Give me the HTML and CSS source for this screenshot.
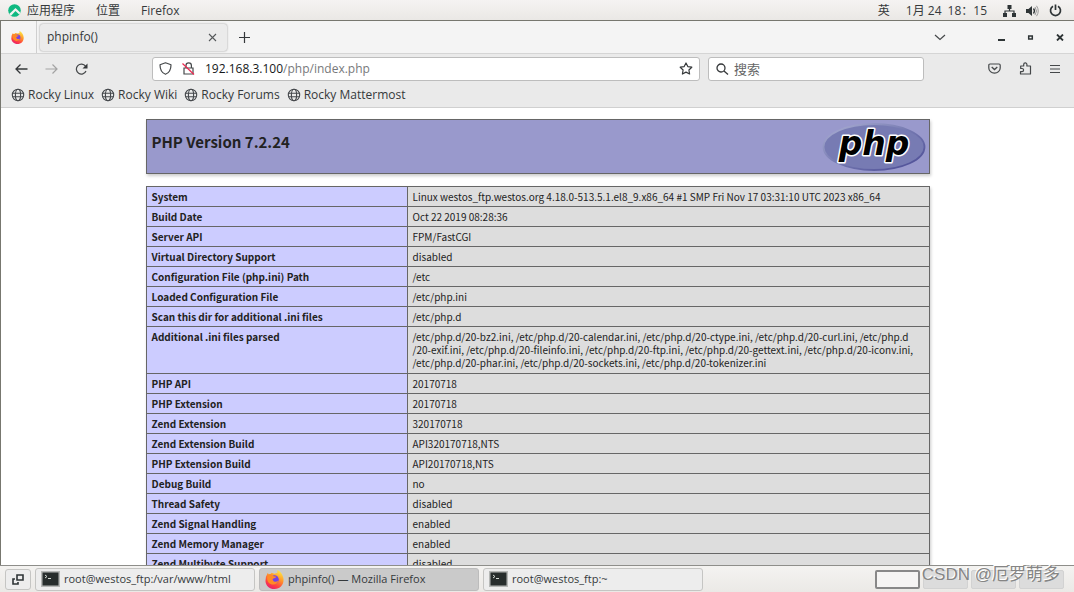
FILE: index.html
```html
<!DOCTYPE html>
<html lang="zh-CN">
<head>
<meta charset="utf-8">
<title>phpinfo()</title>
<link rel="stylesheet" href="styles.css">
</head>
<body>
<svg class="defs" width="0" height="0" aria-hidden="true">
  <defs>
    <linearGradient id="flame" x1="0.8" y1="0" x2="0.3" y2="1"><stop offset="0" stop-color="#fff04a"/><stop offset="0.4" stop-color="#ff9a2a"/><stop offset="0.75" stop-color="#ff4340"/><stop offset="1" stop-color="#e81e6f"/></linearGradient>
    <symbol id="firefox" viewBox="0 0 20 20">
      <path d="M1 7 3 3l1 2 2-1 1-1 3 1 3-1 0-3c3 1 6 5 6.500 9.500C20 16 15.500 20 10 20S.5 16 .5 11.500Z" fill="url(#flame)"/>
      <circle cx="10" cy="10" r="4.500" fill="#7542e5"/>
      <path d="M3 5c3-1 5 0 6 1.500l3 .5c-1 2-4 1.500-4 3 1 3 4 3 6 1-1 5-8 6-11 1C2 10 2 7 3 5Z" fill="#ff8a26"/>
    </symbol>
    <symbol id="globe" viewBox="0 0 14 14"><g fill="none" stroke="#45484c" stroke-width="1.100"><circle cx="7" cy="7" r="5.700"/><ellipse cx="7" cy="7" rx="2.600" ry="5.700"/><path d="M1.500 5.300h11M1.500 8.700h11"/></g></symbol>
    <symbol id="terminal" viewBox="0 0 19 16"><path d="M0 0h19v16H0z" fill="#b5b7b5"/><path d="M1.500 1.500h16v13h-16z" fill="#272d2c"/><path d="m4 4 2 1.500L4 7M7 7.500h3" fill="none" stroke="#d5dbd5"/></symbol>
  </defs>
</svg>
<div class="desktop">
  <header class="topbar">
    <nav class="menus">
      <button class="plain apps"><svg width="13" height="13" viewBox="0 0 13 13"><circle cx="6.500" cy="6.500" r="6.300" fill="#10b981"/><path d="M1.200 10 7.500 4l5 4.800-1.300 1.700L7.500 7 3 11.700Z" fill="#f3f2f0"/></svg>应用程序</button>
      <button class="plain">位置</button>
      <button class="plain">Firefox</button>
    </nav>
    <div class="status">
      <span>英</span>
      <time>1月 24&ensp;18：15</time>
      <div class="tray">
        <svg width="13" height="12" viewBox="0 0 13 12"><path d="M4.500 0h4v4h-4zM0 8h4v4H0zM9 8h4v4H9z" fill="#2e3436"/><path d="M6.500 4v2M2 8V6h9v2" fill="none" stroke="#2e3436" stroke-width="1.200"/></svg>
        <svg width="13" height="12" viewBox="0 0 13 12"><path d="M0 4h2.500L6 1v10L2.500 8H0z" fill="#2e3436"/><path d="M7.500 3.500q2 2.500 0 5" fill="none" stroke="#2e3436" stroke-width="1.300"/><path d="M9 2q3 4 0 8M10.500.8q3.500 5.200 0 10.400" fill="none" stroke="#999"/></svg>
        <svg width="13" height="13" viewBox="0 0 13 13"><path d="M4 2.200a5 5 0 1 0 5 0M6.500.500v5.500" fill="none" stroke="#2e3436" stroke-width="1.700"/></svg>
      </div>
    </div>
  </header>

  <main class="browser">
    <div class="tabbar">
      <div class="pinned"><svg width="13" height="13"><use href="#firefox"/></svg></div>
      <div class="tab"><span>phpinfo()</span><button class="plain" aria-label="Close tab"><svg width="9" height="9" viewBox="0 0 9 9"><path d="m1 1 7 7M8 1 1 8" stroke="#55585a" stroke-width="1.100"/></svg></button></div>
      <button class="plain new" aria-label="New tab"><svg width="11" height="11" viewBox="0 0 11 11"><path d="M5.500 0v11M0 5.500h11" stroke="#35383a" stroke-width="1.200"/></svg></button>
      <div class="window-buttons">
        <button class="plain list" aria-label="List tabs"><svg width="12" height="7" viewBox="0 0 12 7"><path d="m1 1 5 4.500L11 1" fill="none" stroke="#45484a" stroke-width="1.200"/></svg></button>
        <button class="plain" aria-label="Minimize"><svg width="7" height="7" viewBox="0 0 7 7"><path d="M0 5h7v2H0z" fill="#2e3436"/></svg></button>
        <button class="plain" aria-label="Maximize"><svg width="7" height="7" viewBox="0 0 7 7"><path d="M1.700 2h3.600v3H1.700z" fill="none" stroke="#2e3436" stroke-width="1.500"/></svg></button>
        <button class="plain" aria-label="Close"><svg width="8" height="7" viewBox="0 0 8 7"><path d="m1 .5 6 6M7 .5l-6 6" stroke="#2e3436" stroke-width="1.800"/></svg></button>
      </div>
    </div>
    <div class="toolbar">
      <div class="history">
        <button class="plain" aria-label="Back"><svg width="13" height="12" viewBox="0 0 13 12"><path d="M12.500 6H1M5.500 1.500 1 6l4.500 4.500" fill="none" stroke="#35383a" stroke-width="1.300"/></svg></button>
        <button class="plain" aria-label="Forward"><svg width="13" height="12" viewBox="0 0 13 12"><path d="M.5 6H12M7.500 1.500 12 6l-4.500 4.500" fill="none" stroke="#a3a3a3" stroke-width="1.200"/></svg></button>
        <button class="plain" aria-label="Reload"><svg width="13" height="12" viewBox="0 0 13 12"><path d="M10.500 3.200A5 5 0 1 0 11 8" fill="none" stroke="#45484a" stroke-width="1.200"/><path d="M12.500.500v5h-5z" fill="#35383a"/></svg></button>
      </div>
      <div class="address">
        <svg width="13" height="13" viewBox="0 0 13 13"><path d="m6.500.8 5.500 2C12 8 10 11 6.500 12.300 3 11 1 8 1 2.800Z" fill="none" stroke="#45484a" stroke-width="1.200" stroke-linejoin="round"/></svg>
        <svg width="13" height="13" viewBox="0 0 13 13"><path d="M2 6h9v6H2zM4 6V3.500a2.700 2.700 0 0 1 5.400 0V6" fill="none" stroke="#45484a" stroke-width="1.200"/><path d="m.5 1.500 11.500 11" stroke="#ee2850" stroke-width="1.200"/></svg>
        <a href="#" aria-label="Address"><b>192.168.3.100</b>/php/index.php</a>
        <button class="plain" aria-label="Bookmark"><svg width="14" height="13" viewBox="0 0 14 13"><path d="m7 1 1.800 3.600 4 .6-2.900 2.800.7 4L7 10.100 3.400 12l.7-4-2.900-2.800 4-.6Z" fill="none" stroke="#35383a" stroke-width="1.200" stroke-linejoin="round"/></svg></button>
      </div>
      <label class="search"><svg width="13" height="12" viewBox="0 0 13 12"><circle cx="5" cy="5" r="4" fill="none" stroke="#35383a" stroke-width="1.300"/><path d="m8 8 4 3.500" stroke="#35383a" stroke-width="1.300"/></svg><input type="text" placeholder="搜索" aria-label="搜索"></label>
      <div class="tools">
        <button class="plain" aria-label="Pocket"><svg width="13" height="11" viewBox="0 0 13 11"><path d="M2 1h9q1.200 0 1.200 1.200V5a5.700 5.200 0 0 1-11.400 0V2.200Q.800 1 2 1Z" fill="none" stroke="#45484a" stroke-width="1.200"/><path d="m3.700 4 2.800 2.600L9.300 4" fill="none" stroke="#45484a" stroke-width="1.300"/></svg></button>
        <button class="plain" aria-label="Extensions"><svg width="13" height="13" viewBox="0 0 13 13"><path d="M1.700 4h3V2.500a1.600 1.600 0 0 1 3.200 0V4h3.600v8h-10V9.700h1.500a1.500 1.500 0 0 0 0-3.200H1.700Z" fill="none" stroke="#45484a" stroke-width="1.200" stroke-linejoin="round"/></svg></button>
        <button class="plain" aria-label="Menu"><svg width="10" height="8" viewBox="0 0 10 8"><path d="M0 .5h10M0 4h10M0 7.500h10" stroke="#45484a"/></svg></button>
      </div>
    </div>
    <nav class="bookmarks">
      <a href="#"><svg width="14" height="14"><use href="#globe"/></svg>Rocky Linux</a>
      <a href="#"><svg width="14" height="14"><use href="#globe"/></svg>Rocky Wiki</a>
      <a href="#"><svg width="14" height="14"><use href="#globe"/></svg>Rocky Forums</a>
      <a href="#"><svg width="14" height="14"><use href="#globe"/></svg>Rocky Mattermost</a>
    </nav>
    <section class="page">
      <div class="banner">
        <h1>PHP Version 7.2.24</h1>
        <svg width="104" height="50" viewBox="0 0 104 50" role="img" aria-label="PHP logo">
          <defs><linearGradient id="rim" x1="0" y1="0" x2="1" y2="1"><stop offset="0" stop-color="#aeb2d5"/><stop offset="0.5" stop-color="#7478b0"/><stop offset="1" stop-color="#484893"/></linearGradient></defs>
          <ellipse cx="52" cy="25" rx="50.500" ry="23" fill="#777bb3" stroke="url(#rim)" stroke-width="1.800"/>
          <text x="52" y="33" class="logo-text" text-anchor="middle">php</text>
        </svg>
      </div>
      <table class="info">
        <tbody>
          <tr><th scope="row">System</th><td>Linux westos_ftp.westos.org 4.18.0-513.5.1.el8_9.x86_64 #1 SMP Fri Nov 17 03:31:10 UTC 2023 x86_64</td></tr>
          <tr><th scope="row">Build Date</th><td>Oct 22 2019 08:28:36</td></tr>
          <tr><th scope="row">Server API</th><td>FPM/FastCGI</td></tr>
          <tr><th scope="row">Virtual Directory Support</th><td>disabled</td></tr>
          <tr><th scope="row">Configuration File (php.ini) Path</th><td>/etc</td></tr>
          <tr><th scope="row">Loaded Configuration File</th><td>/etc/php.ini</td></tr>
          <tr><th scope="row">Scan this dir for additional .ini files</th><td>/etc/php.d</td></tr>
          <tr class="files"><th scope="row">Additional .ini files parsed</th><td>/etc/php.d/20-bz2.ini, /etc/php.d/20-calendar.ini, /etc/php.d/20-ctype.ini, /etc/php.d/20-curl.ini, /etc/php.d<wbr>/20-exif.ini, /etc/php.d/20-fileinfo.ini, /etc/php.d/20-ftp.ini, /etc/php.d/20-gettext.ini, /etc/php.d/20-iconv.ini, /etc/php.d/20-phar.ini, /etc/php.d/20-sockets.ini, /etc/php.d/20-tokenizer.ini</td></tr>
          <tr><th scope="row">PHP API</th><td>20170718</td></tr>
          <tr><th scope="row">PHP Extension</th><td>20170718</td></tr>
          <tr><th scope="row">Zend Extension</th><td>320170718</td></tr>
          <tr><th scope="row">Zend Extension Build</th><td>API320170718,NTS</td></tr>
          <tr><th scope="row">PHP Extension Build</th><td>API20170718,NTS</td></tr>
          <tr><th scope="row">Debug Build</th><td>no</td></tr>
          <tr><th scope="row">Thread Safety</th><td>disabled</td></tr>
          <tr><th scope="row">Zend Signal Handling</th><td>enabled</td></tr>
          <tr><th scope="row">Zend Memory Manager</th><td>enabled</td></tr>
          <tr><th scope="row">Zend Multibyte Support</th><td>disabled</td></tr>
        </tbody>
      </table>
    </section>
  </main>

  <footer class="taskbar">
    <button class="task show" aria-label="Show desktop"><svg width="12" height="11" viewBox="0 0 12 11"><path d="M5 1h6v5H5z" fill="none" stroke="#2e3436" stroke-width="1.600"/><path d="M3 5H1v5h5V8" fill="none" stroke="#2e3436" stroke-width="1.600"/></svg></button>
    <button class="task"><svg width="19" height="16"><use href="#terminal"/></svg>root@westos_ftp:/var/www/html</button>
    <button class="task active"><svg width="19" height="19"><use href="#firefox"/></svg>phpinfo() — Mozilla Firefox</button>
    <button class="task"><svg width="19" height="16"><use href="#terminal"/></svg>root@westos_ftp:~</button>
    <div class="workspaces">
      <button class="current" aria-label="Workspace 1"></button><button aria-label="Workspace 2"></button><button aria-label="Workspace 3"></button><button aria-label="Workspace 4"></button>
    </div>
    <span class="watermark">CSDN @厄罗萌多</span>
  </footer>
</div>
</body>
</html>
```
FILE: styles.css
```css
* { box-sizing: border-box; }
body {
  margin: 0;
  font: 12px/16px "Open Sans", "Noto Sans CJK SC", sans-serif;
  color: #35393b;
}
svg { display: block; flex: none; }
.defs { position: absolute; }
a { color: inherit; text-decoration: none; }
button { font: inherit; color: inherit; }
.plain { display: flex; align-items: center; padding: 0; border: 0; background: none; }
.desktop { display: flex; flex-direction: column; height: 100vh; overflow: hidden; }

/* desktop panel */
.topbar {
  display: flex; align-items: center; justify-content: space-between;
  flex: none; height: 21px; padding: 1px 12px 0 8px;
  border-bottom: 1px solid #77776f;
  background: linear-gradient(#f5f3f2, #eae8e5);
}
.menus { display: flex; gap: 21px; }
.apps { gap: 6px; }
.status { display: flex; align-items: center; gap: 16px; }
.tray { display: flex; align-items: center; gap: 10px; }

/* browser chrome */
.browser {
  display: flex; flex-direction: column; flex: 1; min-height: 0;
  border-left: 1px solid #77776f;
  background: #eaeaea;
}
.tabbar {
  display: flex; align-items: center; flex: none; height: 33px;
  border-bottom: 1px solid #d5d5d5;
  background: #f4f4f4;
}
.pinned { display: flex; align-items: center; align-self: stretch; width: 36px; padding-left: 10px; border-right: 1px solid #cfcfcf; }
.tab {
  display: flex; align-items: center; justify-content: space-between;
  width: 187px; height: 27px; margin-left: 3px; padding: 0 10px 0 7px;
  border-radius: 3px; background: #ebebeb; box-shadow: 0 0 2px #8c8c8c;
}
.new { margin-left: 12px; }
.window-buttons { display: flex; align-items: center; gap: 22px; margin-left: auto; padding-right: 10px; }
.list { margin-right: 30px; }
.toolbar { display: flex; align-items: center; flex: none; height: 29px; }
.history { display: flex; gap: 17px; width: 151px; padding-left: 14px; flex: none; }
.address, .search {
  display: flex; align-items: center; height: 24px;
  border: 1px solid #bdbdbd; border-radius: 3px; background: #fff;
}
.address { flex: 1; gap: 10px; padding: 0 6px; color: #77797b; }
.address a { flex: 1; }
.address b { font-weight: 400; color: #15181a; }
.search { flex: 0 1 216px; gap: 5px; min-width: 0; margin-left: 8px; padding-left: 7px; }
.search input { width: 100%; min-width: 0; padding: 0; border: 0; outline: 0; background: none; font: inherit; font-size: 13px; }
.search input::placeholder { color: #666; opacity: 1; }
.tools { display: flex; align-items: center; justify-content: flex-end; gap: 18px; flex: none; width: 150px; padding-right: 14px; }
.bookmarks { display: flex; align-items: center; gap: 7px; flex: none; height: 25px; padding-left: 10px; border-bottom: 1px solid #d0d0d0; }
.bookmarks a { display: flex; align-items: center; gap: 3px; }

/* document */
.page {
  flex: 1; min-height: 0; overflow: hidden; padding: 11px 16px 0;
  background: #fff; color: #222;
  font: 10px/13px "Noto Sans CJK SC", sans-serif;
}
.banner {
  display: flex; justify-content: space-between;
  max-width: 784px; height: 55px; margin: 0 auto 12px; padding: 2px 3px 0 5px;
  border: 1px solid #666; background: #9999cc; box-shadow: 1px 2px 3px #ccc;
}
h1 { margin: 10px 0 0; font-size: 15px; line-height: 20px; }
.logo-text {
  font: italic bold 33px "DejaVu Sans", sans-serif;
  fill: #000; stroke: #fff; stroke-width: 3px; paint-order: stroke; stroke-linejoin: round;
}
.info {
  width: 100%; max-width: 784px; margin: 0 auto; table-layout: fixed;
  border-collapse: collapse; box-shadow: 1px 2px 3px #ccc;
}
.info th, .info td { padding: 3px 5px; border: 1px solid #666; text-align: left; vertical-align: top; }
.info th { width: 261px; background: #ccccff; }
.info td { background: #dddddd; }
.files { height: 47px; }

/* window list */
.taskbar {
  display: flex; align-items: center; gap: 4px; flex: none; position: relative;
  height: 27px; padding: 0 10px 0 5px;
  border-top: 1px solid #8e8e8a;
  background: linear-gradient(#f4f3f1, #ebe9e6);
  font-size: 11px;
}
.task {
  display: flex; align-items: center; gap: 4px; flex: 0 1 220px; height: 23px; padding: 0 5px;
  border: 1px solid #c5c5c3; border-radius: 3px; background: #ededed; white-space: nowrap;
}
.task.active { background: #cacaca; border-color: #bcbcbc; }
.task.show { flex: 0 0 25px; height: 21px; padding: 0 6px; }
.workspaces { display: flex; gap: 3px; margin-left: auto; }
.workspaces button { width: 45px; height: 19px; padding: 0; border: 1px solid #d2d2d2; border-radius: 2px; background: #dcdcdc; }
.workspaces .current { border: 2px solid #888; background: #f5f4f3; }
.watermark {
  position: absolute; right: 14px; bottom: 6px;
  font: 17px/22px "Liberation Sans", "Noto Sans CJK SC", sans-serif;
  color: #858585; text-shadow: -1px -1px 0 #fff; white-space: nowrap;
}
```
